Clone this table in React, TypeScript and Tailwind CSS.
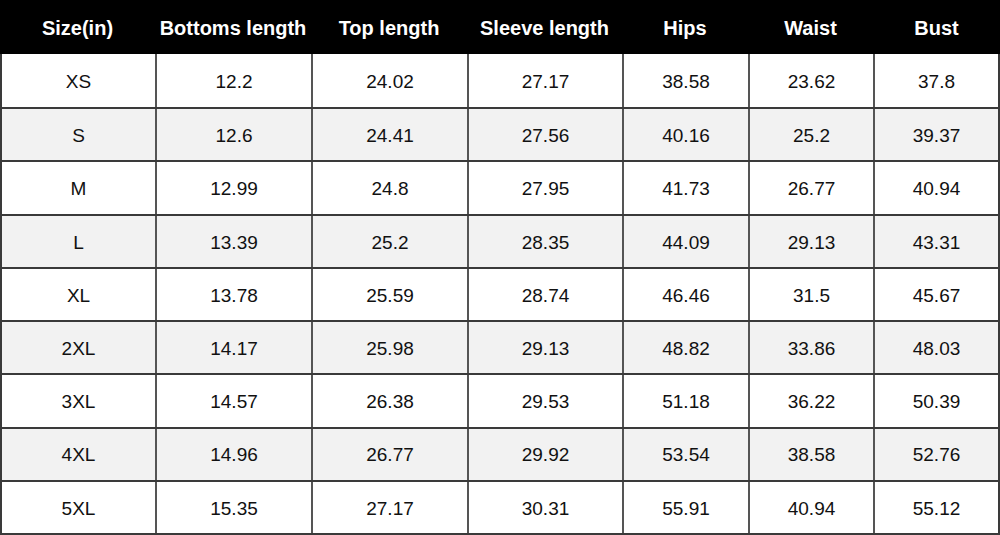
const headers = ["Size(in)", "Bottoms length", "Top length", "Sleeve length", "Hips", "Waist", "Bust"];

const rows = [
  ["XS", "12.2", "24.02", "27.17", "38.58", "23.62", "37.8"],
  ["S", "12.6", "24.41", "27.56", "40.16", "25.2", "39.37"],
  ["M", "12.99", "24.8", "27.95", "41.73", "26.77", "40.94"],
  ["L", "13.39", "25.2", "28.35", "44.09", "29.13", "43.31"],
  ["XL", "13.78", "25.59", "28.74", "46.46", "31.5", "45.67"],
  ["2XL", "14.17", "25.98", "29.13", "48.82", "33.86", "48.03"],
  ["3XL", "14.57", "26.38", "29.53", "51.18", "36.22", "50.39"],
  ["4XL", "14.96", "26.77", "29.92", "53.54", "38.58", "52.76"],
  ["5XL", "15.35", "27.17", "30.31", "55.91", "40.94", "55.12"],
];

const cols = "grid grid-cols-[155px_156px_156px_155px_126px_125px_1fr]";

export default function App() {
  return (
    <div className="w-[1000px] h-[535px] bg-white font-['Liberation_Sans',Arial,sans-serif] text-[19px] text-[#111] flex flex-col">
      <div className={`${cols} h-[54px] bg-black text-white font-bold text-[20px]`}>
        {headers.map((h) => (
          <div key={h} className="flex items-center justify-center pt-[1px]">
            {h}
          </div>
        ))}
      </div>
      <div className="flex-1 grid grid-rows-9 border-l-2 border-r-2 border-b-2 border-[#3a3a3a]">
        {rows.map((r, i) => (
          <div
            key={r[0]}
            className={`${cols} ${i > 0 ? "border-t-2 border-[#3a3a3a]" : ""} ${i % 2 === 1 ? "bg-[#f2f2f2]" : "bg-white"}`}
          >
            {r.map((c, j) => (
              <div
                key={j}
                className={`flex items-center justify-center pt-[3px] ${j < 6 ? "border-r-2 border-[#555]" : ""}`}
              >
                {c}
              </div>
            ))}
          </div>
        ))}
      </div>
    </div>
  );
}
